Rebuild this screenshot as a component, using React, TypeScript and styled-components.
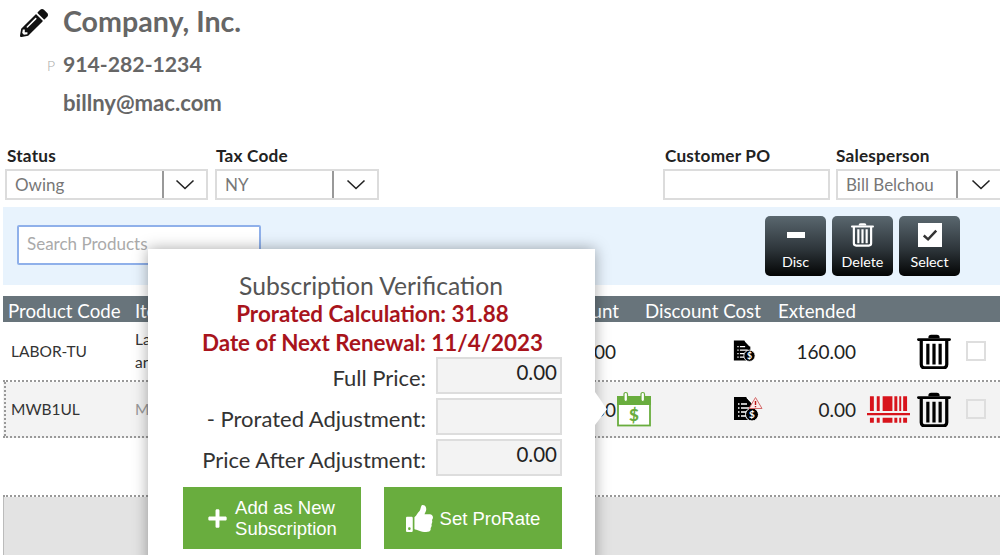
import React from "react";
import styled, { createGlobalStyle } from "styled-components";
import { FaPencilAlt, FaThumbsUp, FaPlus } from "react-icons/fa";

const Global = createGlobalStyle`
  html, body { margin: 0; padding: 0; background: #fff; overflow: hidden; }
  * { box-sizing: border-box; }
  body { font-family: Lato, "Open Sans", sans-serif; }
`;

const Page = styled.div`
  position: relative;
  width: 1000px;
  height: 555px;
  overflow: hidden;
`;

const Contact = styled.header`
  display: grid;
  grid-template-columns: 47px 16px 1fr;
  grid-template-rows: 41px 46px 30px;
  align-content: start;
  height: 144px;
  align-items: center;
`;
const PencilCell = styled.div`
  grid-column: 1 / 3;
  display: flex;
  padding-left: 20px;
  padding-top: 5px;
  color: #111;
  font-size: 28px;
  line-height: 0;
`;
const CompanyName = styled.div`
  font-size: 28.6px;
  font-weight: 700;
  color: #666;
`;
const PhoneTag = styled.div`
  font-size: 14px;
  font-weight: 300;
  color: #aaa;
  grid-column: 2;
  margin-top: 2px;
`;
const ContactLine = styled.div<{ $size: number }>`
  font-size: ${(p) => p.$size}px;
  font-weight: 700;
  color: #666;
  grid-column: 3;
`;

const Fields = styled.div`
  display: flex;
  height: 63px;
  padding-left: 5px;
`;
const Field = styled.div<{ $w: number; $ml?: number }>`
  width: ${(p) => p.$w}px;
  margin-left: ${(p) => p.$ml ?? 0}px;
  flex: none;
`;
const FieldLabel = styled.div<{ $inset: number }>`
  font-size: 17.2px;
  font-weight: 700;
  letter-spacing: 0.2px;
  color: #222;
  height: 25px;
  line-height: 23px;
  margin-left: ${(p) => p.$inset}px;
`;
const SelectBox = styled.div`
  display: flex;
  height: 31px;
  border: 2px solid #dcdcdc;
  background: #fff;
`;
const SelectText = styled.div`
  flex: 1;
  padding-left: 8px;
  font-size: 17px;
  line-height: 27px;
  color: #777;
  white-space: nowrap;
  overflow: hidden;
`;
const Chevron = styled.div<{ $w: number }>`
  width: ${(p) => p.$w}px;
  flex: none;
  border-left: 2px solid #999;
  display: flex;
  align-items: center;
  justify-content: center;
`;

const SearchBar = styled.div`
  height: 78px;
  margin: 0 0 0 3px;
  background: #e8f3fd;
  display: flex;
  align-items: flex-start;
  padding-left: 14px;
`;
const SearchInput = styled.div`
  width: 244px;
  height: 40px;
  margin-top: 18px;
  border: 2px solid #8fb0ea;
  border-radius: 2px;
  background: #fff;
  padding-left: 8px;
  font-size: 17px;
  line-height: 33px;
  color: #aaa;
  white-space: nowrap;
`;
const Actions = styled.div`
  margin-left: auto;
  margin-right: 40px;
  margin-top: 9px;
  display: flex;
  gap: 6px;
`;
const ActionButton = styled.div`
  width: 61px;
  height: 60px;
  border-radius: 5px;
  background: linear-gradient(#5a676f, #2e363b 55%, #030404);
  color: #fff;
  display: flex;
  flex-direction: column;
  align-items: center;
  font-size: 14.3px;
  padding-top: 3px;
`;
const ActionIcon = styled.div`
  height: 31px;
  display: flex;
  align-items: center;
  justify-content: center;
`;
const ActionLabel = styled.div`
  margin-top: 4px;
  line-height: 15px;
`;

const Table = styled.section`
  margin: 11px 0 0 3px;
  height: 270px;
  border-left: 1px solid #bbb;
  background: #e3e3e3;
`;
const cols = "130px 347px 136px 29px 133px 78px 60px 1fr";
const HeadRow = styled.div`
  display: grid;
  grid-template-columns: ${cols};
  height: 26px;
  margin-left: -1px;
  background: #68747b;
  color: #fff;
  font-size: 18.7px;
  line-height: 30px;
  white-space: nowrap;
`;
const HeadCell = styled.div<{ $pad?: number }>`
  padding-left: ${(p) => p.$pad ?? 0}px;
  overflow: hidden;
`;
const HeadCellRight = styled.div`
  text-align: right;
  margin-right: -3px;
  overflow: hidden;
`;
const Row = styled.div<{ $h: number; $shade?: boolean }>`
  position: relative;
  display: grid;
  grid-template-columns: ${cols};
  height: ${(p) => p.$h}px;
  margin-left: -1px;
  background: ${(p) => (p.$shade ? "#f3f3f3" : "#fff")};
  border-bottom: 2px dotted #999;
  align-items: center;
  white-space: nowrap;
  &::before {
    content: "";
    display: ${(p) => (p.$shade ? "block" : "none")};
    position: absolute;
    left: 1px;
    top: 0;
    bottom: 0;
    border-left: 2px dotted #999;
  }
`;
const CodeCell = styled.div`
  padding-left: 8px;
  font-size: 15.5px;
  color: #333;
`;
const ItemCell = styled.div<{ $muted?: boolean }>`
  padding-left: 2px;
  font-size: 15.5px;
  line-height: 23px;
  color: ${(p) => (p.$muted ? "#999" : "#333")};
`;
const AmountCell = styled.div`
  text-align: right;
  font-size: 19px;
  color: #222;
`;
const IconCell = styled.div`
  display: flex;
  justify-content: flex-start;
  align-items: center;
  line-height: 0;
  & > svg { flex: none; }
`;
const DocCell = styled(IconCell)`
  padding-left: 88px;
`;
const ExtendedCell = styled.div`
  text-align: right;
  font-size: 19px;
  color: #222;
`;
const ActionCell = styled.div`
  display: flex;
  align-items: center;
  justify-content: flex-end;
  grid-column: 7 / 9;
  padding-right: 14px;
  line-height: 0;
`;
const BarcodeSlot = styled.div`
  margin-right: 7px;
  display: flex;
`;
const Check = styled.div`
  width: 20px;
  height: 20px;
  margin-left: 15px;
  border: 2px solid #dedede;
  background: #fff;
`;
const CheckMuted = styled(Check)`
  background: #f3f3f3;
`;

const Popover = styled.aside`
  position: absolute;
  left: 148px;
  top: 249px;
  width: 447px;
  height: 320px;
  background: #fff;
  box-shadow: 0 0 14px rgba(0, 0, 0, 0.35);
  padding: 20px 33px 0 35px;
`;
const Arrow = styled.div`
  position: absolute;
  right: -12px;
  top: 143px;
  width: 12px;
  height: 33px;
  background: #fff;
  clip-path: polygon(0 0, 100% 52%, 0 100%);
`;
const PopTitle = styled.div`
  text-align: center;
  font-size: 24.7px;
  line-height: 34px;
  color: #555;
  height: 30px;
  padding-right: 3px;
`;
const PopRed = styled.div`
  text-align: center;
  font-size: 22.4px;
  font-weight: 700;
  color: #a8141c;
  line-height: 29px;
  white-space: nowrap;
`;
const PriceRow = styled.div`
  display: flex;
  justify-content: flex-end;
  align-items: center;
  height: 37px;
  margin-bottom: 4px;
`;
const PriceLabel = styled.div`
  font-size: 22px;
  color: #333;
  margin-right: 10px;
  margin-top: 3px;
  white-space: nowrap;
`;
const PriceInput = styled.div`
  width: 126px;
  height: 37px;
  background: #f3f3f3;
  border: 2px solid #ddd;
  text-align: right;
  padding-right: 3px;
  font-size: 20.5px;
  line-height: 27px;
  color: #222;
`;
const PopButtons = styled.div`
  display: flex;
  gap: 23px;
  margin-top: 11px;
`;
const GreenButton = styled.div`
  width: 178px;
  height: 62px;
  background: #69ad3e;
  color: #fff;
  display: flex;
  align-items: center;
  justify-content: center;
  font-family: "Liberation Sans", Arial, sans-serif;
  font-size: 18.5px;
  line-height: 21px;
`;
const GreenIcon = styled.div`
  display: flex;
  line-height: 0;
  margin-right: 7px;
`;

const ChevronIcon = () => (
  <svg width="20" height="11" viewBox="0 0 20 11" fill="none" stroke="#222" strokeWidth="1.6">
    <path d="M1.5 1.5 L10 9.5 L18.5 1.5" />
  </svg>
);

const TrashIcon = ({ size = 34, color = "#000" }: { size?: number; color?: string }) => (
  <svg width={size} height={size * 1.08} viewBox="0 0 36 38" fill="none">
    <path d="M1.5 6.5h33" stroke={color} strokeWidth="3" strokeLinecap="round" />
    <path d="M12 5c0-2.500 1-3.500 3-3.500h6c2 0 3 1 3 3.500" fill={color} />
    <path d="M4.500 7v26c0 2 1 3.500 3.500 3.500h20c2.500 0 3.500-1.500 3.500-3.500V7" stroke={color} strokeWidth="3.400" />
    <path d="M11.500 11v22M18 11v22M24.500 11v22" stroke={color} strokeWidth="3.400" />
  </svg>
);

const DocIcon = ({ warn }: { warn?: boolean }) => (
  <svg width={warn ? 30 : 26} height="26" viewBox="0 0 30 26">
    <path d="M1 1h12l7 7v16H1z" fill="#000" />
    <path d="M14 1.500l5.500 6" stroke="#fff" strokeWidth="1.200" />
    <path d="M5 8h1.500M8 8h6M5 12h1.500M8 12h9M5 16h1.500M8 16h6M5 20h1.500M8 20h5" stroke="#fff" strokeWidth="1.300" />
    <circle cx="19" cy="18.500" r="6.500" fill="#000" stroke="#fff" strokeWidth="1" />
    <text x="19" y="22" fontSize="10" fontWeight="700" fill="#fff" textAnchor="middle" fontFamily="Lato">$</text>
    {warn && (
      <>
        <path d="M22.500 1.500L29 12.500H16z" fill="#fbeaea" stroke="#d36a6a" strokeWidth="1" />
        <path d="M22.500 5v4M22.500 10v1.300" stroke="#b11" strokeWidth="1.400" />
      </>
    )}
  </svg>
);

const CalendarIcon = () => (
  <svg width="36" height="36" viewBox="0 0 36 36" fill="none">
    <rect x="2" y="6" width="32" height="28.500" fill="#fff" stroke="#69ad3e" strokeWidth="1.800" />
    <rect x="1" y="5" width="34" height="9" fill="#69ad3e" />
    <rect x="8" y="1.500" width="3.500" height="9" rx="1.700" fill="#fff" stroke="#69ad3e" strokeWidth="1.200" />
    <rect x="25" y="1.500" width="3.500" height="9" rx="1.700" fill="#fff" stroke="#69ad3e" strokeWidth="1.200" />
    <text x="18" y="30" fontSize="17" fontWeight="900" fill="#69ad3e" textAnchor="middle" fontFamily="Lato">$</text>
  </svg>
);

const BarcodeIcon = () => (
  <svg width="43" height="28" viewBox="0 0 44 28" fill="#d8141c">
    <path d="M3 1h4v15H3zM10 1h3v15h-3zM16 1h10v15H16zM28 1h3v15h-3zM33 1h2v15h-2zM37 1h4v15h-4z" />
    <path d="M0 18h44v2.500H0z" />
    <path d="M3 23h4v5H3zM10 23h3v5h-3zM16 23h10v5H16zM28 23h3v5h-3zM33 23h2v5h-2zM37 23h4v5h-4z" />
  </svg>
);

export default function App() {
  return (
    <Page>
      <Global />
      <Contact>
        <PencilCell>
          <FaPencilAlt />
        </PencilCell>
        <CompanyName>Company, Inc.</CompanyName>
        <PhoneTag>P</PhoneTag>
        <ContactLine $size={21.2}>914-282-1234</ContactLine>
        <ContactLine $size={22.1}>billny@mac.com</ContactLine>
      </Contact>

      <Fields>
        <Field $w={203}>
          <FieldLabel $inset={2}>Status</FieldLabel>
          <SelectBox>
            <SelectText>Owing</SelectText>
            <Chevron $w={44}><ChevronIcon /></Chevron>
          </SelectBox>
        </Field>
        <Field $w={164} $ml={7}>
          <FieldLabel $inset={1}>Tax Code</FieldLabel>
          <SelectBox>
            <SelectText>NY</SelectText>
            <Chevron $w={45}><ChevronIcon /></Chevron>
          </SelectBox>
        </Field>
        <Field $w={167} $ml={284}>
          <FieldLabel $inset={2}>Customer PO</FieldLabel>
          <SelectBox />
        </Field>
        <Field $w={170} $ml={6}>
          <FieldLabel $inset={0}>Salesperson</FieldLabel>
          <SelectBox>
            <SelectText>Bill Belchou</SelectText>
            <Chevron $w={48}><ChevronIcon /></Chevron>
          </SelectBox>
        </Field>
      </Fields>

      <SearchBar>
        <SearchInput>Search Products</SearchInput>
        <Actions>
          <ActionButton>
            <ActionIcon>
              <svg width="18" height="6" viewBox="0 0 18 6"><rect width="18" height="6" fill="#fff" /></svg>
            </ActionIcon>
            <ActionLabel>Disc</ActionLabel>
          </ActionButton>
          <ActionButton>
            <ActionIcon><TrashIcon size={23} color="#fff" /></ActionIcon>
            <ActionLabel>Delete</ActionLabel>
          </ActionButton>
          <ActionButton>
            <ActionIcon>
              <svg width="24" height="24" viewBox="0 0 25 25">
                <rect width="25" height="25" fill="#fff" />
                <path d="M6 13l4.500 4L19 8" fill="none" stroke="#333" strokeWidth="2.600" />
              </svg>
            </ActionIcon>
            <ActionLabel>Select</ActionLabel>
          </ActionButton>
        </Actions>
      </SearchBar>

      <Table>
        <HeadRow>
          <HeadCell $pad={5}>Product Code</HeadCell>
          <HeadCell $pad={2}>Item</HeadCell>
          <HeadCellRight>Discount</HeadCellRight>
          <div />
          <HeadCell>Discount Cost</HeadCell>
          <HeadCell>Extended</HeadCell>
        </HeadRow>
        <Row $h={60}>
          <CodeCell>LABOR-TU</CodeCell>
          <ItemCell>Labor<br />and</ItemCell>
          <AmountCell>0.00</AmountCell>
          <div />
          <DocCell><DocIcon /></DocCell>
          <ExtendedCell>160.00</ExtendedCell>
          <ActionCell>
            <TrashIcon />
            <Check />
          </ActionCell>
        </Row>
        <Row $h={56} $shade>
          <CodeCell>MWB1UL</CodeCell>
          <ItemCell $muted>MWB1</ItemCell>
          <AmountCell>0.00</AmountCell>
          <IconCell><CalendarIcon /></IconCell>
          <DocCell><DocIcon warn /></DocCell>
          <ExtendedCell>0.00</ExtendedCell>
          <ActionCell>
            <BarcodeSlot><BarcodeIcon /></BarcodeSlot>
            <TrashIcon />
            <CheckMuted />
          </ActionCell>
        </Row>
        <Row $h={59} />
      </Table>

      <Popover>
        <Arrow />
        <PopTitle>Subscription Verification</PopTitle>
        <PopRed>Prorated Calculation: 31.88</PopRed>
        <PopRed>Date of Next Renewal: 11/4/2023</PopRed>
        <PriceRow>
          <PriceLabel>Full Price:</PriceLabel>
          <PriceInput>0.00</PriceInput>
        </PriceRow>
        <PriceRow>
          <PriceLabel>- Prorated Adjustment:</PriceLabel>
          <PriceInput />
        </PriceRow>
        <PriceRow>
          <PriceLabel>Price After Adjustment:</PriceLabel>
          <PriceInput>0.00</PriceInput>
        </PriceRow>
        <PopButtons>
          <GreenButton>
            <GreenIcon><FaPlus size={21} /></GreenIcon>
            <div>Add as New<br />Subscription</div>
          </GreenButton>
          <GreenButton>
            <GreenIcon><FaThumbsUp size={27} /></GreenIcon>
            <div>Set ProRate</div>
          </GreenButton>
        </PopButtons>
      </Popover>
    </Page>
  );
}
